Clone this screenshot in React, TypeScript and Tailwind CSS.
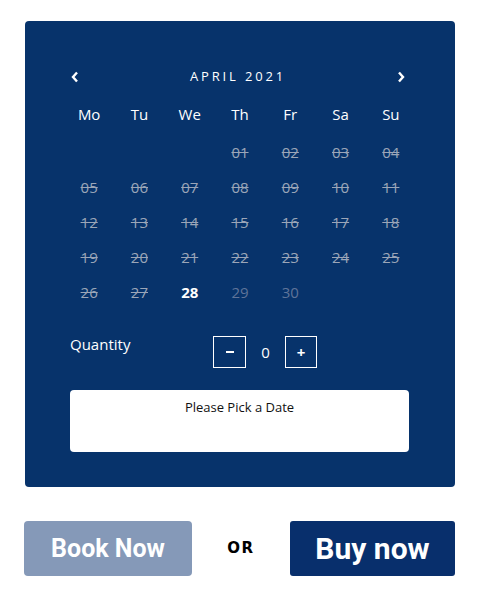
import React from 'react';

const weekdays = ['Mo', 'Tu', 'We', 'Th', 'Fr', 'Sa', 'Su'];

// April 2021 starts on a Thursday
const cells: (number | null)[] = [null, null, null, ...Array.from({ length: 30 }, (_, i) => i + 1)];

const pad = (n: number) => (n < 10 ? `0${n}` : `${n}`);

const DayCell = ({ day }: { day: number | null }) => {
  if (day === null) return <div className="h-[35px]" />;
  if (day < 28) {
    return (
      <div className="h-[35px] flex items-center justify-center text-[15px] text-[#9ba6b8] line-through decoration-[#9ba6b8]">
        {pad(day)}
      </div>
    );
  }
  if (day === 28) {
    return <div className="h-[35px] flex items-center justify-center text-[15px] font-bold text-white">{day}</div>;
  }
  return <div className="h-[35px] flex items-center justify-center text-[15px] text-[#5f7499]">{day}</div>;
};

export default function App() {
  return (
    <div className="w-[491px] h-[601px] bg-white pt-[21px]" style={{ fontFamily: '"Open Sans", "Noto Sans", sans-serif' }}>
      <div className="ml-[25px] w-[430px] h-[466px] bg-[#07336b] rounded-[4px] pt-[46px] px-[39px]">
        <div className="flex items-center justify-between pl-[6px] pr-[10px] h-[20px]">
          <svg width="10" height="12" viewBox="0 0 10 12" className="text-white">
            <path d="M7 1.5 L3 6 L7 10.5" fill="none" stroke="currentColor" strokeWidth="2.4" />
          </svg>
          <span className="text-[13px] tracking-[0.22em] text-white font-medium">APRIL 2021</span>
          <svg width="10" height="12" viewBox="0 0 10 12" className="text-white">
            <path d="M3 1.5 L7 6 L3 10.5" fill="none" stroke="currentColor" strokeWidth="2.4" />
          </svg>
        </div>
        <div className="grid grid-cols-7 mt-[17px]">
          {weekdays.map((d) => (
            <div key={d} className="h-[20px] flex items-center justify-center text-[15px] text-white">
              {d}
            </div>
          ))}
        </div>
        <div className="grid grid-cols-7 mt-[11px]">
          {cells.map((d, i) => (
            <DayCell key={i} day={d} />
          ))}
        </div>
        <div className="flex items-start mt-[26px] pl-[6px]">
          <span className="text-[15px] text-white mt-[-3px] w-[143px]">Quantity</span>
          <div className="flex items-center">
            <button className="w-[33px] h-[32px] border border-white flex items-center justify-center text-white">
              <span className="block w-[8px] h-[2px] bg-white" />
            </button>
            <span className="w-[39px] text-center text-[15px] text-white">0</span>
            <button className="w-[32px] h-[32px] border border-white flex items-center justify-center text-white text-[15px] font-bold">
              +
            </button>
          </div>
        </div>
        <div className="mt-[22px] ml-[6px] w-[339px] h-[62px] bg-white rounded-[4px] flex justify-center pt-[8px]">
          <span className="text-[13px] text-[#111]">Please Pick a Date</span>
        </div>
      </div>
      <div className="flex items-center mt-[34px] pl-[24px]" style={{ fontFamily: 'Roboto, "Liberation Sans", sans-serif' }}>
        <button className="w-[168px] h-[55px] bg-[#8599b8] rounded-[4px] text-white text-[25px] font-bold">Book Now</button>
        <span className="w-[98px] text-center text-[15px] font-black text-black tracking-[0.1em]" style={{ fontFamily: '"DejaVu Sans", sans-serif' }}>OR</span>
        <button className="w-[165px] h-[55px] bg-[#082f6c] rounded-[3px] text-white text-[30px] font-bold">Buy now</button>
      </div>
    </div>
  );
}
